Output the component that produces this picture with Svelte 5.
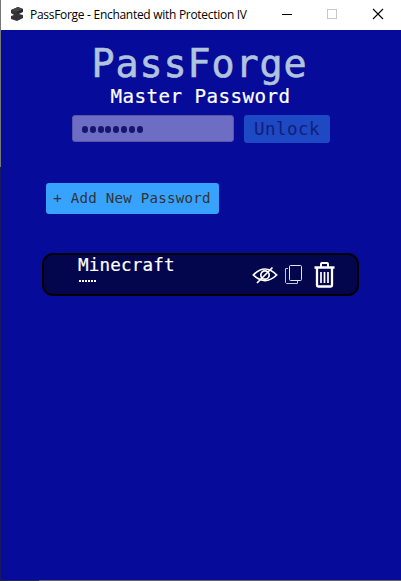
<script>
  let master = $state('********');
  const entries = [{ name: 'Minecraft', length: 6 }];
  const dots = (n) => Array.from({ length: n });
</script>

<div class="window">
  <header>
    <svg class="logo" width="14" height="16" viewBox="0 0 14 16">
      <path d="M1 4 8 1l5 2v3l-4 2 4 1v3l-6 3-6-2v-3l3-1-3-2z" fill="#333438" />
      <path d="M1 4 8 1l5 2-6 3z" fill="#434449" />
      <path d="M7 6.5 13 4" stroke="#1c1d20" fill="none" />
    </svg>
    <span class="caption">PassForge - Enchanted with Protection IV</span>
    <svg class="controls" width="138" height="30" viewBox="0 0 138 30" fill="none" shape-rendering="crispEdges">
      <path d="M19 14.5h10" stroke="#000" />
      <rect x="64.5" y="9.5" width="9" height="9" stroke="#c8c8c8" />
      <path d="m110 9 10 10m0-10-10 10" stroke="#000" stroke-width="1.1" shape-rendering="auto" />
    </svg>
  </header>
  <main>
    <h1>PassForge</h1>
    <h2>Master Password</h2>
    <div class="unlock-row">
      <div class="field" aria-label={master}>
        {#each dots(master.length) as _}<i></i>{/each}
      </div>
      <button class="unlock">Unlock</button>
    </div>
    <button class="add">+ Add New Password</button>
    {#each entries as entry}
      <section class="entry">
        <div class="info">
          <span class="name">{entry.name}</span>
          <span class="secret">{#each dots(entry.length) as _}<i></i>{/each}</span>
        </div>
        <svg class="eye" width="26" height="18" viewBox="0 0 26 18" fill="none" stroke="#fff" stroke-width="1.7">
          <path d="M1.3 9Q13-3 24.7 9 13 20 1.300 9z" />
          <circle cx="13" cy="9" r="4.2" />
          <path d="M5 17 20.500 1.500" />
        </svg>
        <svg class="copy" width="18" height="20" viewBox="0 0 18 20" fill="none">
          <rect x="4.5" y=".5" width="12" height="15" rx="1" stroke="#e6e6f0" />
          <path d="M3 3.500H.5V17.500l1 1H12.500V16" stroke="#c4c4d8" />
        </svg>
        <svg class="trash" width="22" height="26" viewBox="0 0 22 26" fill="none" stroke="#fff" stroke-width="2">
          <path d="M7 5V2q0-1 1-1h5q1 0 1 1v3" />
          <path d="M.5 5.500h20M3 6v17q0 1.500 1.500 1.500h12Q18 24.500 18 23V6" stroke-width="2.3" />
          <path d="M7 10v11M10.500 10v11M14 10v11" stroke-width="1.7" />
        </svg>
      </section>
    {/each}
  </main>
  <footer></footer>
</div>

<style>
  :global(body) { margin: 0; overflow: hidden; }
  * { box-sizing: border-box; }
  .window {
    width: 401px; height: 581px; display: flex; flex-direction: column;
    background: linear-gradient(#777 0 167px, #181a5c 167px) 0 0 / 1px 100% no-repeat;
    padding-left: 1px; font-family: "DejaVu Sans Mono", monospace;
  }
  header { height: 30px; flex: none; display: flex; align-items: center; background: #fff; padding-left: 9px; }
  .logo { flex: none; margin-top: -2px; }
  .caption { margin-left: 6px; font: 12px/16px "Open Sans", sans-serif; color: #000; white-space: nowrap; letter-spacing: -0.29px; }
  .controls { flex: none; margin-left: auto; }
  main { flex: 1; display: flex; flex-direction: column; background: #070b99; }
  h1, h2 { margin: 0; font-weight: 400; text-align: center; white-space: nowrap; }
  h1 { margin-top: 10px; height: 45px; padding-right: 3px; font-size: 38.4px; line-height: 48px; letter-spacing: 0.88px; color: #b0c4de; -webkit-text-stroke: 0.6px #b0c4de; }
  h2 { height: 24px; padding-right: 1px; font-size: 19.2px; line-height: 24px; letter-spacing: 0.44px; color: #fff; -webkit-text-stroke: 0.2px #fff; }
  .unlock-row { display: flex; gap: 10px; margin: 6px 0 0 71px; height: 28px; }
  .field {
    width: 162px; height: 27px; display: flex; align-items: center; gap: 1.8px; padding: 2px 0 0 9px;
    background: #6c6dc3; border: 1px solid #5656ac; border-radius: 3px;
  }
  .field i { width: 6px; height: 6.5px; border-radius: 50%; background: #15166e; }
  button { border: 0; border-radius: 3px; padding: 0; font-family: inherit; white-space: nowrap; text-align: center; }
  .unlock { width: 86px; height: 28px; background: #1d49c4; color: #141c7a; font-size: 17.6px; line-height: 28px; letter-spacing: 0.4px; }
  .add { width: 173px; height: 31px; margin: 39.500px 0 0 44.500px; background: #37a3ff; color: #333; font-size: 14.2px; line-height: 31px; letter-spacing: 0.22px; }
  .entry {
    width: 317px; height: 43px; margin: 39.500px 0 0 41px; display: flex; padding-left: 34px;
    background: #03054d; border: 2px solid #000; border-radius: 11px;
  }
  .info { width: 174px; display: flex; flex-direction: column; }
  .name { color: #fff; font-size: 17.6px; line-height: 20px; height: 25px; letter-spacing: 0.15px; -webkit-text-stroke: 0.2px #fff; }
  .secret { display: flex; gap: 1px; padding-left: 1px; }
  .secret i { width: 2px; height: 2px; background: #fff; }
  .entry svg { flex: none; }
  .eye { margin-top: 11px; }
  .copy { margin: 10px 0 0 7px; }
  .trash { margin: 7px 0 0 11px; }
  footer { height: 1px; background: linear-gradient(90deg, #24264a 38px, #666 38px); }
</style>
